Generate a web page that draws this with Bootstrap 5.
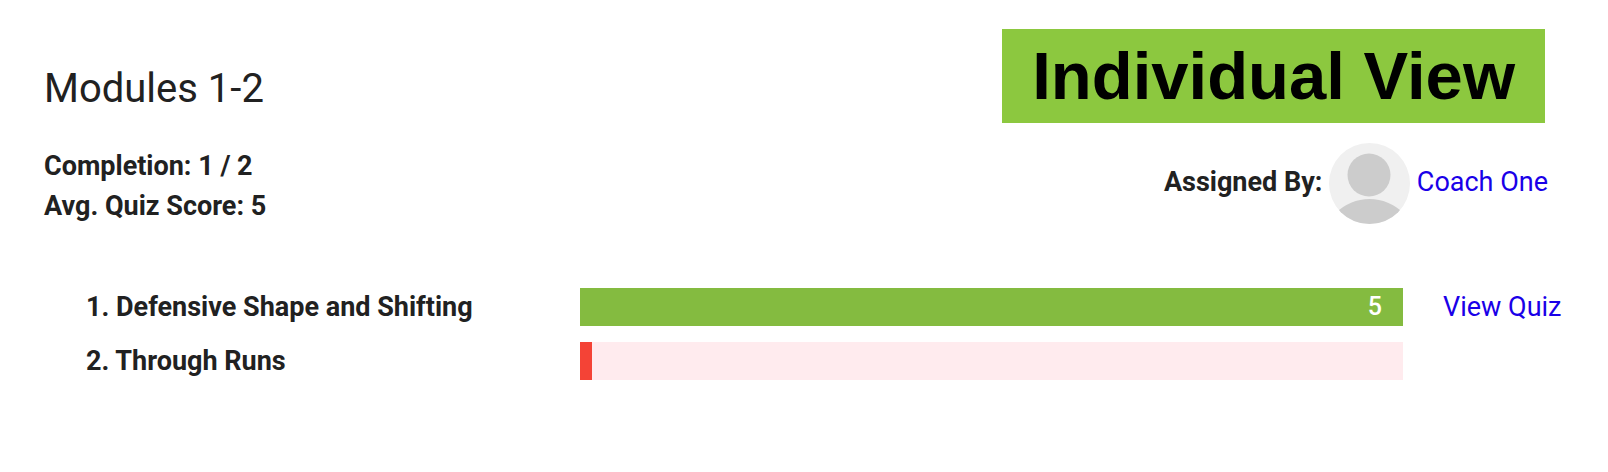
<!DOCTYPE html>
<html lang="en">
<head>
<meta charset="utf-8">
<meta name="viewport" content="width=device-width, initial-scale=1">
<title>Modules 1-2</title>
<link href="https://cdn.jsdelivr.net/npm/bootstrap@5.3.0/dist/css/bootstrap.min.css" rel="stylesheet">
<style>
  body { font-family: Roboto, sans-serif; font-size: 27px; line-height: 40px; color: #212121; background: #fff; }
  a { color: #1a00e8; text-decoration: none; }
  a:hover { text-decoration: underline; }
  .report { padding: 0 44px; }
  .summary { padding-top: 65px; }
  .summary h1 { font-size: 40px; line-height: 48px; font-weight: 400; margin-bottom: 33px; }
  .overview { padding: 29px 16px 0 0; }
  .view-banner { background: #8cc83f; color: #000; font: 700 67px/94px "Liberation Sans", Arial, sans-serif; padding: 0 30px; margin: 0 3px 20px 0; }
  .avatar { width: 81px; height: 81px; }
  .modules { padding-left: 42px; margin-top: 62px; row-gap: 16px; }
  .module-row { display: grid; grid-template-columns: minmax(0, 3fr) minmax(0, 5fr) 161px; line-height: 38px; }
  .quiz-link { padding-left: 40px; }
  .progress { height: 38px; border-radius: 0; background: #ffebee; font-size: 25px; }
  .bar-done { background: #84bb40; text-align: right; padding-right: 21px; font-weight: 500; }
  .bar-todo { background: #f44336; }
</style>
</head>
<body>
<main class="report">
  <header class="d-flex justify-content-between align-items-start">
    <div class="summary">
      <h1>Modules 1-2</h1>
      <div class="fw-bold">Completion: 1 / 2</div>
      <div class="fw-bold">Avg. Quiz Score: 5</div>
    </div>
    <div class="overview d-flex flex-column align-items-end">
      <h2 class="view-banner text-nowrap">Individual View</h2>
      <div class="assigned lh-1 text-nowrap">
        <strong>Assigned By:</strong>
        <svg class="avatar align-middle" viewBox="0 0 81 81" role="img" aria-label="Coach One avatar">
          <defs><clipPath id="avatarClip"><circle cx="40.5" cy="40.5" r="40.5"/></clipPath></defs>
          <g clip-path="url(#avatarClip)">
            <rect width="81" height="81" fill="#f0f0f0"/>
            <circle cx="40" cy="32" r="21.5" fill="#ccc"/>
            <circle cx="40.5" cy="104" r="48" fill="#ccc"/>
          </g>
        </svg>
        <a href="#coach">Coach One</a>
      </div>
    </div>
  </header>
  <section class="modules d-flex flex-column">
    <div class="module-row">
      <div class="fw-bold">1. Defensive Shape and Shifting</div>
      <div class="progress" role="progressbar" aria-label="Defensive Shape and Shifting" aria-valuenow="100" aria-valuemin="0" aria-valuemax="100">
        <div class="progress-bar bar-done" style="width: 100%">5</div>
      </div>
      <a class="quiz-link text-nowrap" href="#quiz">View Quiz</a>
    </div>
    <div class="module-row">
      <div class="fw-bold">2. Through Runs</div>
      <div class="progress" role="progressbar" aria-label="Through Runs" aria-valuenow="1.5" aria-valuemin="0" aria-valuemax="100">
        <div class="progress-bar bar-todo" style="width: 1.5%"></div>
      </div>
    </div>
  </section>
</main>
<script src="https://cdn.jsdelivr.net/npm/bootstrap@5.3.0/dist/js/bootstrap.bundle.min.js"></script>
</body>
</html>
